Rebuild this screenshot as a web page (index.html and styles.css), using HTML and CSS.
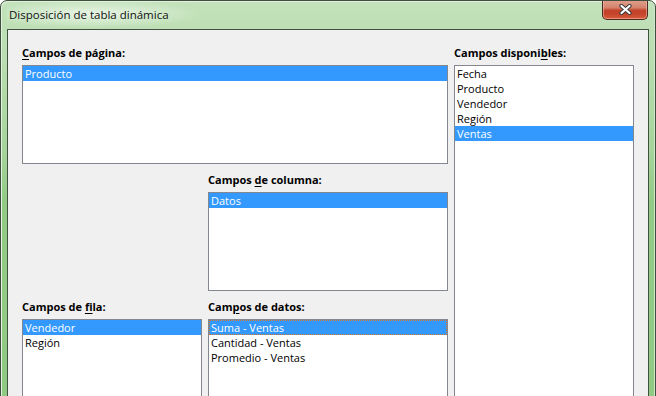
FILE: index.html
```html
<!DOCTYPE html>
<html lang="es">
<head>
<meta charset="utf-8">
<title>Disposición de tabla dinámica</title>
<link rel="stylesheet" href="styles.css">
</head>
<body>
<div class="window">
  <div class="titlebar">
    <span class="title">Disposición de tabla dinámica</span>
    <button class="close" aria-label="Cerrar">
      <svg width="13" height="11" viewBox="0 0 13 11">
        <path d="M2.5 2 L10.5 9 M10.5 2 L2.5 9" stroke="#3b3b3b" stroke-width="4.2" stroke-linecap="round"/>
        <path d="M2.5 2 L10.5 9 M10.5 2 L2.5 9" stroke="#ffffff" stroke-width="2.2" stroke-linecap="round"/>
      </svg>
    </button>
  </div>
  <div class="client">
    <div class="layout">
      <div class="label l-page"><u>C</u>ampos de página:</div>
      <div class="label l-avail">Campos disponi<u>b</u>les:</div>
      <ul class="list page-list">
        <li class="sel">Producto</li>
      </ul>
      <ul class="list avail-list">
        <li>Fecha</li>
        <li>Producto</li>
        <li>Vendedor</li>
        <li>Región</li>
        <li class="sel">Ventas</li>
      </ul>
      <div class="label l-col">Campos <u>d</u>e columna:</div>
      <ul class="list col-list">
        <li class="sel">Datos</li>
      </ul>
      <div class="label l-row">Campos de <u>f</u>ila:</div>
      <div class="label l-data">Cam<u>p</u>os de datos:</div>
      <ul class="list row-list">
        <li class="sel">Vendedor</li>
        <li>Región</li>
      </ul>
      <ul class="list data-list">
        <li class="sel focus">Suma - Ventas</li>
        <li>Cantidad - Ventas</li>
        <li>Promedio - Ventas</li>
      </ul>
    </div>
  </div>
</div>
</body>
</html>
```

FILE: styles.css
```css
html, body {
  margin: 0;
  padding: 0;
  overflow: hidden;
  background: #ffffff;
}

body {
  font-family: "Open Sans", "Noto Sans", sans-serif;
  font-size: 11px;
  color: #000;
}

.window {
  width: 656px;
  height: 430px;
  box-sizing: border-box;
  border: 1px solid #3e4f3e;
  border-radius: 7px 7px 0 0;
  background: linear-gradient(180deg, #c3e2bb 0px, #b9ddb0 60px, #a6d49b 150px, #92cb86 200px, #8fca83 430px);
  box-shadow: inset 1px 1px 0 #e2f1de, inset -1px 0 0 #d0e8ca;
  padding: 0 6px;
  display: flex;
  flex-direction: column;
  overflow: hidden;
}

.titlebar {
  flex: 0 0 28px;
  height: 28px;
  display: flex;
  align-items: flex-start;
  padding-left: 2px;
  background: radial-gradient(ellipse 110px 14px at 85px 13px, rgba(235, 246, 232, 0.95), rgba(235, 246, 232, 0) 100%);
}

.title {
  padding-top: 6px;
  line-height: 16px;
  font-size: 11.5px;
  color: #111;
}

.close {
  flex: 0 0 auto;
  margin: -1px 1px 0 auto;
  width: 46px;
  height: 20px;
  padding: 0;
  border: 1px solid #4a2a22;
  border-top: none;
  border-radius: 0 0 5px 5px;
  background: linear-gradient(180deg, #e0a08e 0%, #d5836d 40%, #c4442a 55%, #c2432a 70%, #d95a39 100%);
  box-shadow: inset 0 0 0 1px rgba(255, 210, 195, 0.45);
  display: flex;
  align-items: center;
  justify-content: center;
}

.close svg {
  display: block;
  margin-top: -1px;
}

.client {
  flex: 1 0 auto;
  background: #f0f0f0;
  border: 1px solid #405140;
  padding: 15px 14px 0 14px;
}

.layout {
  display: grid;
  grid-template-columns: 180px 240px 180px;
  grid-template-rows: 20px 99px 28px 99px 28px 120px;
  column-gap: 6px;
}

.label {
  align-self: end;
  line-height: 15px;
  padding-bottom: 5px;
  font-weight: 700;
  white-space: nowrap;
}

.label u {
  text-decoration-thickness: 1px;
  text-underline-offset: 2px;
}

.l-page { grid-column: 1 / 3; grid-row: 1; }
.l-avail { grid-column: 3; grid-row: 1; }
.page-list { grid-column: 1 / 3; grid-row: 2; }
.avail-list { grid-column: 3; grid-row: 2 / 7; }
.l-col { grid-column: 2; grid-row: 3; }
.col-list { grid-column: 2; grid-row: 4; }
.l-row { grid-column: 1; grid-row: 5; }
.l-data { grid-column: 2; grid-row: 5; }
.row-list { grid-column: 1; grid-row: 6; }
.data-list { grid-column: 2; grid-row: 6; }

.list {
  list-style: none;
  margin: 0;
  padding: 0;
  background: #ffffff;
  border: 1px solid #828790;
  box-sizing: border-box;
}

.list li {
  height: 15px;
  line-height: 15px;
  padding-left: 2px;
  white-space: nowrap;
  box-sizing: border-box;
}

.list li.sel {
  background: #3399ff;
  color: #ffffff;
}

.list li.focus {
  border: 1px dotted #d9762e;
  padding-left: 1px;
  line-height: 13px;
}
```
